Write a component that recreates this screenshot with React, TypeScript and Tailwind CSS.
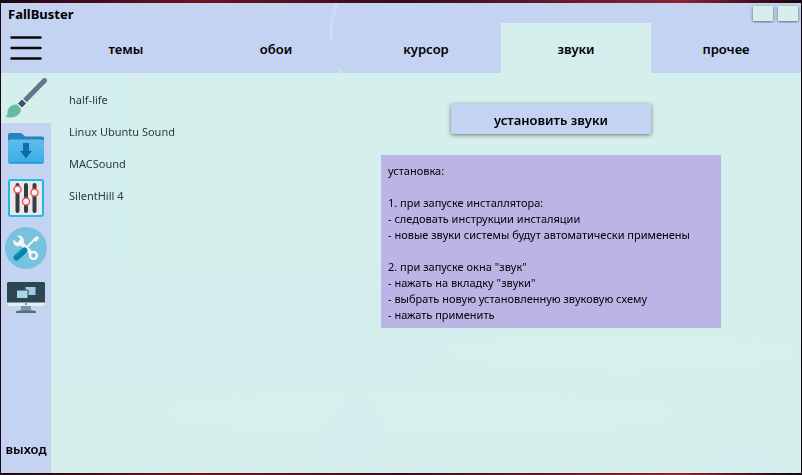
import React from "react";

const tabs = ["темы", "обои", "курсор", "звуки", "прочее"];
const sounds = ["half-life", "Linux Ubuntu Sound", "MACSound", "SilentHill 4"];

function Backdrop() {
  return (
    <svg className="pointer-events-none absolute inset-0 h-full w-full" viewBox="0 0 800 470" preserveAspectRatio="none" aria-hidden="true">
      <defs>
        <filter id="soft" x="-20%" y="-50%" width="140%" height="200%">
          <feGaussianBlur stdDeviation="8" />
        </filter>
        <filter id="edge">
          <feGaussianBlur stdDeviation="2" />
        </filter>
      </defs>
      <g filter="url(#soft)">
        <path d="M0 20H130V270H380L500 330L390 385H0Z" fill="#d3eeef" opacity=".7" />
        <ellipse cx="420" cy="410" rx="260" ry="16" fill="#d9f0ec" />
        <ellipse cx="620" cy="350" rx="180" ry="14" fill="#d7f0ea" />
        <ellipse cx="740" cy="460" rx="40" ry="8" fill="#d1edef" />
      </g>
      <path d="M312 456Q330 392 360 394Q383 398 386 456Z" fill="#d2eeee" opacity=".8" filter="url(#edge)" />
    </svg>
  );
}

function BrushIcon() {
  return (
    <svg viewBox="0 0 42 42" className="h-[42px] w-[42px]" aria-hidden="true">
      <path d="M20 23.500L39.500 3.500" stroke="#61758d" strokeWidth="5" />
      <circle cx="39.500" cy="3.500" r="2.500" fill="#61758d" />
      <path d="M13.500 26.500L17 23L20.500 26.500L17 30Z" fill="#40566a" stroke="#40566a" />
      <path d="M12 27.500C6 27 2.500 31 2.500 36C2.500 38 1.500 39 0 40C7 41 11.500 40 14 37C16 34.500 16 32 15.500 31Z" fill="#68bb9b" />
    </svg>
  );
}

function FolderIcon() {
  return (
    <svg viewBox="0 0 36 32" className="h-8 w-9" aria-hidden="true">
      <defs>
        <linearGradient id="folder" x2="0" y2="1">
          <stop stopColor="#60bdec" />
          <stop offset="1" stopColor="#36ade6" />
        </linearGradient>
      </defs>
      <path d="M0 8V3Q0 1 2 1H12Q14 1 15.500 3L17 4.500H34Q36 4.500 36 6.500V14H0Z" fill="#2584b9" />
      <rect y="7.500" width="36" height="24.500" rx="2.500" fill="url(#folder)" />
      <path d="M1 30.500H35" stroke="#2a99d0" />
      <path d="M15 11H21V19H24L18 26.500L12 19H15Z" fill="#106da8" />
    </svg>
  );
}

function MixerIcon() {
  return (
    <svg viewBox="0 0 36 38" className="h-[38px] w-9" aria-hidden="true">
      <rect x="1" y="1" width="34" height="36" rx="2" fill="#eee7e8" stroke="#1fbbe2" strokeWidth="2" />
      <path d="M9.500 6V32M18 6V32M26.500 6V32" stroke="#343d46" strokeWidth="4" strokeLinecap="round" />
      <g fill="#fff" stroke="#f05552" strokeWidth="1.500">
        <circle cx="9.500" cy="10.500" r="3.500" />
        <circle cx="18" cy="22.500" r="3.500" />
        <circle cx="26.500" cy="13.500" r="3.500" />
      </g>
    </svg>
  );
}

function ToolsIcon() {
  return (
    <svg viewBox="0 0 42 42" className="h-[42px] w-[42px]" aria-hidden="true">
      <circle cx="21" cy="21" r="21" fill="#77c3df" />
      <path d="M14 14L28 28" stroke="#f5f5f5" strokeWidth="4" />
      <path d="M12 8.500L15.500 12L14.500 15L11.500 15.500L8.500 12.500C7.500 16 9.500 19 13 19.500L17 18L19 15L18.500 12C17.500 9 15 8 12 8.500Z" fill="#f5f5f5" />
      <circle cx="28.500" cy="28.500" r="3.500" fill="#77c3df" stroke="#f5f5f5" strokeWidth="2.500" />
      <path d="M20 22L29.500 12.500" stroke="#eef4f5" strokeWidth="2" />
      <path d="M28 12L32 9L34 11L31 15Z" fill="#f5f5f5" />
      <path d="M11.500 30.500L19.500 23.500" stroke="#0686a9" strokeWidth="6" strokeLinecap="round" />
      <path d="M11 28.500L18 22.500" stroke="#17a0bd" strokeWidth="1" />
    </svg>
  );
}

function ScreenIcon() {
  return (
    <svg viewBox="0 0 40 32" className="h-8 w-10" aria-hidden="true">
      <path d="M15 24H25V29H15Z" fill="#7897a5" />
      <path d="M10 31V30Q10 28.500 13 28.500H27Q30 28.500 30 30V31Z" fill="#536f7b" />
      <rect x="1" y="0" width="38" height="24" rx="1.500" fill="#2d4654" />
      <path d="M1 20.500H39V22.500Q39 24 37.500 24H2.500Q1 24 1 22.500Z" fill="#e3eeee" />
      <circle cx="20" cy="22" r="1" fill="#617b85" />
      <rect x="19.500" y="5" width="10" height="8" fill="#a0cddd" />
      <path d="M10.500 8H22V16.500H10.500Z" fill="#a9d7e5" stroke="#2d4654" />
    </svg>
  );
}

const tools = [
  { name: "Оформление", icon: <BrushIcon />, active: true },
  { name: "Загрузки", icon: <FolderIcon />, active: false },
  { name: "Микшер", icon: <MixerIcon />, active: false },
  { name: "Инструменты", icon: <ToolsIcon />, active: false },
  { name: "Экран", icon: <ScreenIcon />, active: false },
];

export default function App() {
  return (
    <div className="flex min-h-screen bg-[linear-gradient(90deg,#1c0713,#6d1420_25%,#350d1c_50%,#8b2333_85%,#16040c)] pt-[3px] pr-px pb-[2px] pl-px font-['Noto_Sans','Open_Sans',sans-serif] text-black">
      <div className="relative flex flex-1 flex-col bg-[#d5efec]">
        <Backdrop />
        <header className="relative flex h-5 items-center justify-between bg-[#c3d3f1] pr-[3px] pl-[7px]">
          <h1 className="pt-[2px] text-[13px] leading-5 font-bold">FallBuster</h1>
          <div className="flex gap-[5px]">
            <button aria-label="Свернуть" className="h-[15px] w-5 bg-[#d7efec] shadow-[0_1px_3px_rgba(0,0,0,0.5)]" />
            <button aria-label="Закрыть" className="h-[15px] w-5 bg-[#d7efec] shadow-[0_1px_3px_rgba(0,0,0,0.5)]" />
          </div>
        </header>
        <div className="relative flex flex-1">
          <aside className="flex w-[50px] shrink-0 flex-col bg-[#c3d3f1]">
            <button aria-label="Меню" className="flex h-[50px] items-center justify-center">
              <svg viewBox="0 0 32 26" className="h-[26px] w-8" aria-hidden="true">
                <path d="M1.500 2.500H30.500M1.500 13H30.500M1.500 23.500H30.500" stroke="#080a0c" strokeWidth="2.500" strokeLinecap="round" />
              </svg>
            </button>
            {tools.map((tool) => (
              <button
                key={tool.name}
                aria-label={tool.name}
                className={`flex h-[50px] items-center justify-center ${tool.active ? "bg-[#d5efec]" : ""}`}
              >
                {tool.icon}
              </button>
            ))}
            <button className="mt-auto h-12 pt-[2px] text-[13px] font-semibold">выход</button>
          </aside>
          <div className="flex min-w-0 flex-1 flex-col">
            <nav className="relative grid h-[50px] grid-cols-5">
              {tabs.map((tab) => (
                <button
                  key={tab}
                  className={`pt-1 text-[13px] font-semibold ${tab === "звуки" ? "bg-[#d5efec]" : "bg-[#c3d3f1]"}`}
                >
                  {tab}
                </button>
              ))}
              <svg viewBox="0 0 20 70" className="pointer-events-none absolute -top-5 left-[276px] h-[70px] w-5" aria-hidden="true">
                <path d="M10 0Q3 18 4 37" fill="none" stroke="#cbdbf8" strokeWidth="4" />
                <path d="M11 64L16 71" stroke="#cbdcf4" strokeWidth="3" />
              </svg>
            </nav>
            <div className="flex flex-1">
              <ul className="w-1/3 pt-[11px] pl-[18px] text-[11px] leading-8 text-[#30383c]">
                {sounds.map((sound) => (
                  <li key={sound}>{sound}</li>
                ))}
              </ul>
              <main className="flex flex-1 flex-col items-center px-5 pt-[31px]">
                <button className="h-[30px] w-[200px] rounded-[2px] bg-[#c3d3f1] pt-1 text-[13px] font-semibold shadow-[0_1px_4px_rgba(0,0,0,0.5)]">
                  установить звуки
                </button>
                <section className="mt-[21px] w-[340px] bg-[#bbb4e5] pt-2 pr-2 pb-[5px] pl-[7px] text-[11px] leading-4">
                  <p>установка:</p>
                  <p className="mt-4">1. при запуске инсталлятора:</p>
                  <p>- следовать инструкции инсталяции</p>
                  <p>- новые звуки системы будут автоматически применены</p>
                  <p className="mt-4">2. при запуске окна "звук"</p>
                  <p>- нажать на вкладку "звуки"</p>
                  <p>- выбрать новую установленную звуковую схему</p>
                  <p>- нажать применить</p>
                </section>
              </main>
            </div>
          </div>
        </div>
      </div>
    </div>
  );
}
